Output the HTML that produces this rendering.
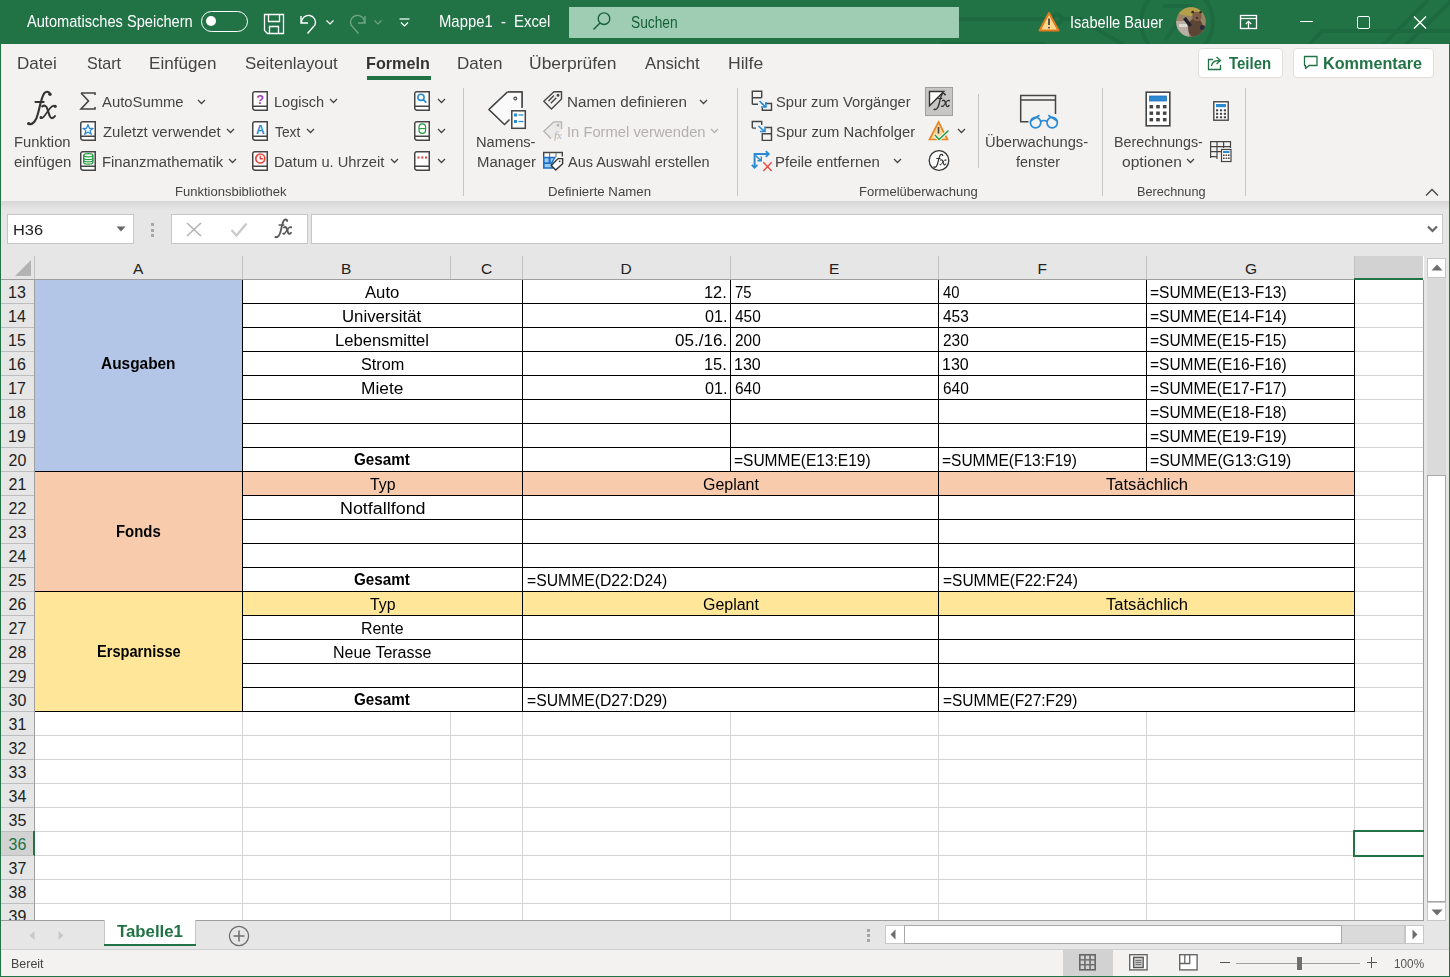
<!DOCTYPE html>
<html><head><meta charset="utf-8"><style>
html,body{margin:0;padding:0;width:1450px;height:977px;overflow:hidden;background:#fff;}
#root{position:relative;width:1450px;height:977px;overflow:hidden;}
#root>div,#root>span,#root>svg{position:absolute;box-sizing:border-box;}
#root>span{white-space:nowrap;transform-origin:0 0;}
#root>svg{overflow:visible;}
</style></head><body><div id="root">
<div style="left:0px;top:0px;width:1450px;height:44px;background:#217346"></div>
<div style="left:0px;top:44px;width:1450px;height:157px;background:#f3f2f1"></div>
<div style="left:0px;top:201px;width:1450px;height:55px;background:#e6e6e6"></div>
<div style="left:0px;top:201px;width:1450px;height:9px;background:linear-gradient(#d6d6d6,#e6e6e6)"></div>
<svg style="left:0px;top:0px;" width="1450" height="44" viewBox="0 0 1450 44"><defs><clipPath id="tbc"><rect width="1450" height="44"/></clipPath></defs><g clip-path="url(#tbc)" stroke="#1e6a40" stroke-width="4" fill="none">
<path d="M959 19 H1052"/><circle cx="1057" cy="19" r="4.5"/><path d="M1061.5 19 H1080 L1125 46"/>
<circle cx="1177" cy="22" r="36"/>
<path d="M1163 6 H1190 L1165 40"/>
<path d="M1308 46 L1322 31 H1452"/>
<path d="M1382 46 L1428 0"/>
<path d="M1405 46 L1452 0"/>
<path d="M940 44 H1045"/>
</g></svg>
<span id="t0" style="left:27.00px;top:14.00px;font:normal 400 15.75px 'Liberation Sans', sans-serif;line-height:15.75px;color:#ffffff;transform:scaleX(0.9278);">Automatisches Speichern</span>
<div style="left:201px;top:11px;width:47px;height:21px;border:1.3px solid #fff;border-radius:11px"></div>
<div style="left:205.5px;top:16px;width:10px;height:10px;background:#fff;border-radius:50%"></div>
<svg style="left:263px;top:13px;" width="22" height="22" viewBox="0 0 22 22"><g fill="none" stroke="#fff" stroke-width="1.3"><path d="M1.5 1.5 H20.5 V20.5 H4.5 L1.5 17.5 Z"/><path d="M5.5 1.5 V8.5 H16.5 V1.5"/><path d="M6.5 20.5 V13.5 H15.5 V20.5"/></g></svg>
<svg style="left:298px;top:13px;" width="22" height="22" viewBox="0 0 22 22"><g fill="none" stroke="#fff" stroke-width="1.4"><path d="M3 3 V10 H10"/><path d="M3.5 9.5 A7 7 0 1 1 17 12 L9.5 20.5"/></g></svg>
<svg style="left:325px;top:19px;" width="10" height="7" viewBox="0 0 10 7"><path d="M1.5 1.5 L5 5 L8.5 1.5" fill="none" stroke="#fff" stroke-width="1.2"/></svg>
<svg style="left:346px;top:13px;" width="22" height="22" viewBox="0 0 22 22"><g fill="none" stroke="#fff" stroke-width="1.4" opacity="0.35"><path d="M19 3 V10 H12"/><path d="M18.5 9.5 A7 7 0 1 0 5 12 L12.5 20.5"/></g></svg>
<svg style="left:373px;top:19px;" width="10" height="7" viewBox="0 0 10 7"><path d="M1.5 1.5 L5 5 L8.5 1.5" fill="none" stroke="#fff" stroke-width="1.2" opacity="0.35"/></svg>
<svg style="left:399px;top:18px;" width="11" height="10" viewBox="0 0 11 10"><g fill="none" stroke="#fff" stroke-width="1.2"><path d="M0.5 1 H10.5"/><path d="M2 4.5 L5.5 8 L9 4.5"/></g></svg>
<span id="t1" style="left:438.56px;top:14.00px;font:normal 400 15.75px 'Liberation Sans', sans-serif;line-height:15.75px;color:#ffffff;transform:scaleX(0.9428);">Mappe1&nbsp;&nbsp;-&nbsp;&nbsp;Excel</span>
<div style="left:569px;top:7px;width:390px;height:31px;background:#9fcdb3"></div>
<svg style="left:592px;top:11px;" width="22" height="22" viewBox="0 0 22 22"><g fill="none" stroke="#17613a" stroke-width="1.4"><circle cx="12" cy="7.7" r="5.8"/><path d="M8 12 L1.5 18.6"/></g></svg>
<span id="t2" style="left:630.50px;top:15.00px;font:normal 400 16px 'Liberation Sans', sans-serif;line-height:16px;color:#17613a;transform:scaleX(0.8601);">Suchen</span>
<svg style="left:1038px;top:11px;" width="22" height="21" viewBox="0 0 22 21"><path d="M11 2 L20.5 19.5 H1.5 Z" fill="#f9d88e" stroke="#e07a1f" stroke-width="2" stroke-linejoin="round"/><path d="M11 7.5 V14" stroke="#333" stroke-width="1.6"/><circle cx="11" cy="16.6" r="0.9" fill="#333"/></svg>
<span id="t3" style="left:1069.57px;top:15.00px;font:normal 400 15.75px 'Liberation Sans', sans-serif;line-height:15.75px;color:#ffffff;transform:scaleX(0.9251);">Isabelle Bauer</span>
<svg style="left:1176px;top:7px;" width="30" height="30" viewBox="0 0 30 30"><defs><clipPath id="avc"><circle cx="15" cy="15" r="14.8"/></clipPath><filter id="avb"><feGaussianBlur stdDeviation="0.6"/></filter></defs>
<g clip-path="url(#avc)"><rect width="30" height="30" fill="#9a8466"/><g filter="url(#avb)"><ellipse cx="15" cy="3" rx="15" ry="6" fill="#b59f4c"/><rect x="0" y="14" width="13" height="16" fill="#b9aea4"/><rect x="3" y="17" width="8" height="3" fill="#ddd8d2"/>
<ellipse cx="19.5" cy="21" rx="7.5" ry="10" fill="#5b4536"/><circle cx="21" cy="9.5" r="4.8" fill="#7d5f46"/><circle cx="16.8" cy="5.2" r="1.4" fill="#3e2e22"/><circle cx="24.8" cy="5.2" r="1.4" fill="#3e2e22"/>
<path d="M8.5 11 L14.5 19" stroke="#22232e" stroke-width="3.6"/><circle cx="26.5" cy="20.5" r="2.6" fill="#2a2b38"/><circle cx="21" cy="11" r="1" fill="#2b2018"/></g></g></svg>
<svg style="left:1239px;top:14px;" width="20" height="16" viewBox="0 0 20 16"><g fill="none" stroke="#fff" stroke-width="1.3"><rect x="1.5" y="1.5" width="16" height="13"/><path d="M1.5 4.5 H17.5"/><path d="M9.5 14 V7.5 M6.8 10 L9.5 7.3 L12.2 10"/></g></svg>
<div style="left:1300px;top:21px;width:13px;height:1.3px;background:#fff"></div>
<div style="left:1357px;top:15.5px;width:12.5px;height:13px;border:1.3px solid #fff;border-radius:2px"></div>
<svg style="left:1413px;top:15.5px;" width="14" height="13" viewBox="0 0 14 13"><path d="M1 0.5 L13 12.5 M13 0.5 L1 12.5" stroke="#fff" stroke-width="1.3"/></svg>
<span id="t4" style="left:17.00px;top:55.00px;font:normal 400 17px 'Liberation Sans', sans-serif;line-height:17px;color:#444444;transform:scaleX(1.0024);">Datei</span>
<span id="t5" style="left:87.30px;top:55.00px;font:normal 400 17px 'Liberation Sans', sans-serif;line-height:17px;color:#444444;transform:scaleX(0.9481);">Start</span>
<span id="t6" style="left:148.99px;top:55.00px;font:normal 400 17px 'Liberation Sans', sans-serif;line-height:17px;color:#444444;transform:scaleX(1.0052);">Einfügen</span>
<span id="t7" style="left:245.00px;top:55.00px;font:normal 400 17px 'Liberation Sans', sans-serif;line-height:17px;color:#444444;transform:scaleX(0.9910);">Seitenlayout</span>
<span id="t8" style="left:366.05px;top:55.00px;font:normal 700 17px 'Liberation Sans', sans-serif;line-height:17px;color:#333;transform:scaleX(0.9516);">Formeln</span>
<div style="left:367px;top:76px;width:64px;height:4px;background:#217346"></div>
<span id="t9" style="left:457.00px;top:55.00px;font:normal 400 17px 'Liberation Sans', sans-serif;line-height:17px;color:#444444;transform:scaleX(1.0021);">Daten</span>
<span id="t10" style="left:528.97px;top:55.00px;font:normal 400 17px 'Liberation Sans', sans-serif;line-height:17px;color:#444444;transform:scaleX(1.0288);">Überprüfen</span>
<span id="t11" style="left:645.00px;top:55.00px;font:normal 400 17px 'Liberation Sans', sans-serif;line-height:17px;color:#444444;transform:scaleX(0.9817);">Ansicht</span>
<span id="t12" style="left:727.96px;top:55.00px;font:normal 400 17px 'Liberation Sans', sans-serif;line-height:17px;color:#444444;transform:scaleX(1.0352);">Hilfe</span>
<div style="left:1198px;top:48px;width:85px;height:30px;background:#fff;border:1px solid #e1dfdd;border-radius:4px"></div>
<div style="left:1293px;top:48px;width:141px;height:30px;background:#fff;border:1px solid #e1dfdd;border-radius:4px"></div>
<svg style="left:1207px;top:55px;" width="16" height="16" viewBox="0 0 16 16"><g fill="none" stroke="#217346" stroke-width="1.3"><path d="M6 4.5 H1.5 V14.5 H13.5 V10"/><path d="M4.5 11 C5 6.5 8 5.5 12 5.5 M9.5 2 L13.5 5.5 L9.5 9"/></g></svg>
<span id="t13" style="left:1228.50px;top:55.00px;font:normal 700 17px 'Liberation Sans', sans-serif;line-height:17px;color:#217346;transform:scaleX(0.8804);">Teilen</span>
<svg style="left:1303px;top:55px;" width="16" height="15" viewBox="0 0 16 15"><path d="M1.5 1.5 H14 V10.5 H6 L2.5 13.5 V10.5 H1.5 Z" fill="none" stroke="#217346" stroke-width="1.3" stroke-linejoin="round"/></svg>
<span id="t14" style="left:1323.05px;top:55.00px;font:normal 700 17px 'Liberation Sans', sans-serif;line-height:17px;color:#217346;transform:scaleX(0.9535);">Kommentare</span>
<svg style="left:26px;top:91px;" width="31.0" height="36.0" viewBox="0 0 31.0 36.0"><g transform="scale(1.0)" fill="none" stroke="#333" stroke-linecap="round">
<path d="M24 3 C23 0.3 20 0.2 18.3 2.2 C15.8 5.2 14 14.5 12 22.5 C10.3 29.5 7 34 3 33" stroke-width="2.1"/>
<circle cx="24" cy="3.2" r="1.7" fill="#333" stroke="none"/><circle cx="2.7" cy="32.6" r="1.7" fill="#333" stroke="none"/>
<path d="M9.3 11 H17.8" stroke-width="1.785"/>
<g transform="translate(0 0)"><path d="M16.2 15.3 C18.6 13.8 20.4 14.8 21.4 18 L23.6 24.8 C24.6 27.8 26.8 28 29 25" stroke-width="2.1"/>
<path d="M29.3 15 C27.3 13.8 25.8 15 23.8 17.6 L18.8 24.4 C17.3 26.8 15.8 27.8 14.8 26.3" stroke-width="1.6800000000000002"/>
<circle cx="29.2" cy="15.3" r="1.6" fill="#333" stroke="none"/><circle cx="15" cy="26.5" r="1.5" fill="#333" stroke="none"/></g>
</g></svg>
<span id="t15" style="left:13.65px;top:134.00px;font:normal 400 15.5px 'Liberation Sans', sans-serif;line-height:15.5px;color:#444444;transform:scaleX(0.9511);">Funktion</span>
<span id="t16" style="left:13.60px;top:154.00px;font:normal 400 15.5px 'Liberation Sans', sans-serif;line-height:15.5px;color:#444444;transform:scaleX(0.9651);">einfügen</span>
<svg style="left:80px;top:92px;" width="16" height="18" viewBox="0 0 16 18"><path d="M1 1 H15 V3 M1 1 L8.5 9 L1 17 H15 V15" fill="none" stroke="#444" stroke-width="1.6" stroke-linejoin="miter"/></svg>
<span id="t17" style="left:102.00px;top:94.00px;font:normal 400 15.5px 'Liberation Sans', sans-serif;line-height:15.5px;color:#444444;transform:scaleX(0.9567);">AutoSumme</span>
<svg style="left:197px;top:99px;" width="9" height="6" viewBox="0 0 9 6"><path d="M1 1 L4.5 4.5 L8 1" fill="none" stroke="#444" stroke-width="1.3" opacity="1"/></svg>
<svg style="left:80px;top:121px;" width="16" height="20" viewBox="0 0 16 20"><g fill="none" stroke="#444" stroke-width="1.5"><path d="M2.75 0.75 H15.25 V19.25 H3 A2.25 2.25 0 0 1 0.75 17 V2.75 A2 2 0 0 1 2.75 0.75 Z" fill="#fff"/><path d="M0.75 15.25 H15.25"/></g><path d="M8 3.5 L9.4 7.3 H13.2 L10.1 9.6 L11.3 13.3 L8 11 L4.7 13.3 L5.9 9.6 L2.8 7.3 H6.6 Z" fill="none" stroke="#2a8ad4" stroke-width="1.2" stroke-linejoin="round"/></svg>
<span id="t18" style="left:102.60px;top:124.00px;font:normal 400 15.5px 'Liberation Sans', sans-serif;line-height:15.5px;color:#444444;transform:scaleX(0.9624);">Zuletzt verwendet</span>
<svg style="left:225.5px;top:128px;" width="9" height="6" viewBox="0 0 9 6"><path d="M1 1 L4.5 4.5 L8 1" fill="none" stroke="#444" stroke-width="1.3" opacity="1"/></svg>
<svg style="left:80px;top:151px;" width="16" height="20" viewBox="0 0 16 20"><g fill="none" stroke="#444" stroke-width="1.5"><path d="M2.75 0.75 H15.25 V19.25 H3 A2.25 2.25 0 0 1 0.75 17 V2.75 A2 2 0 0 1 2.75 0.75 Z" fill="#fff"/><path d="M0.75 15.25 H15.25"/></g><g fill="none" stroke="#1f9a3c" stroke-width="1.3"><ellipse cx="8.3" cy="4.3" rx="4.6" ry="1.6"/><path d="M3.7 4.3 V11.5 A4.6 1.6 0 0 0 12.9 11.5 V4.3"/><path d="M3.7 7 A4.6 1.6 0 0 0 12.9 7"/><path d="M3.7 9.3 A4.6 1.6 0 0 0 12.9 9.3"/></g></svg>
<span id="t19" style="left:101.64px;top:154.00px;font:normal 400 15.5px 'Liberation Sans', sans-serif;line-height:15.5px;color:#444444;transform:scaleX(0.9564);">Finanzmathematik</span>
<svg style="left:227.5px;top:158px;" width="9" height="6" viewBox="0 0 9 6"><path d="M1 1 L4.5 4.5 L8 1" fill="none" stroke="#444" stroke-width="1.3" opacity="1"/></svg>
<svg style="left:252px;top:91px;" width="16" height="20" viewBox="0 0 16 20"><g fill="none" stroke="#444" stroke-width="1.5"><path d="M2.75 0.75 H15.25 V19.25 H3 A2.25 2.25 0 0 1 0.75 17 V2.75 A2 2 0 0 1 2.75 0.75 Z" fill="#fff"/><path d="M0.75 15.25 H15.25"/></g><text x="8.3" y="13" font-family="Liberation Sans" font-weight="bold" font-size="13" fill="#a53fc0" text-anchor="middle">?</text></svg>
<span id="t20" style="left:274.06px;top:94.00px;font:normal 400 15.5px 'Liberation Sans', sans-serif;line-height:15.5px;color:#444444;transform:scaleX(0.9362);">Logisch</span>
<svg style="left:329px;top:98px;" width="9" height="6" viewBox="0 0 9 6"><path d="M1 1 L4.5 4.5 L8 1" fill="none" stroke="#444" stroke-width="1.3" opacity="1"/></svg>
<svg style="left:252px;top:121px;" width="16" height="20" viewBox="0 0 16 20"><g fill="none" stroke="#444" stroke-width="1.5"><path d="M2.75 0.75 H15.25 V19.25 H3 A2.25 2.25 0 0 1 0.75 17 V2.75 A2 2 0 0 1 2.75 0.75 Z" fill="#fff"/><path d="M0.75 15.25 H15.25"/></g><text x="8.3" y="12.5" font-family="Liberation Sans" font-weight="bold" font-size="12" fill="#2a8ad4" text-anchor="middle">A</text></svg>
<span id="t21" style="left:275.00px;top:124.00px;font:normal 400 15.5px 'Liberation Sans', sans-serif;line-height:15.5px;color:#444444;transform:scaleX(0.8928);">Text</span>
<svg style="left:305.5px;top:128px;" width="9" height="6" viewBox="0 0 9 6"><path d="M1 1 L4.5 4.5 L8 1" fill="none" stroke="#444" stroke-width="1.3" opacity="1"/></svg>
<svg style="left:252px;top:151px;" width="16" height="20" viewBox="0 0 16 20"><g fill="none" stroke="#444" stroke-width="1.5"><path d="M2.75 0.75 H15.25 V19.25 H3 A2.25 2.25 0 0 1 0.75 17 V2.75 A2 2 0 0 1 2.75 0.75 Z" fill="#fff"/><path d="M0.75 15.25 H15.25"/></g><circle cx="8.3" cy="7.5" r="4.5" fill="none" stroke="#e8453c" stroke-width="1.7"/><path d="M8.3 4.8 V7.8 H11" fill="none" stroke="#e8453c" stroke-width="1.4"/></svg>
<span id="t22" style="left:274.05px;top:154.00px;font:normal 400 15.5px 'Liberation Sans', sans-serif;line-height:15.5px;color:#444444;transform:scaleX(0.9484);">Datum u. Uhrzeit</span>
<svg style="left:389.5px;top:158px;" width="9" height="6" viewBox="0 0 9 6"><path d="M1 1 L4.5 4.5 L8 1" fill="none" stroke="#444" stroke-width="1.3" opacity="1"/></svg>
<svg style="left:414px;top:91px;" width="16" height="20" viewBox="0 0 16 20"><g fill="none" stroke="#444" stroke-width="1.5"><path d="M2.75 0.75 H15.25 V19.25 H3 A2.25 2.25 0 0 1 0.75 17 V2.75 A2 2 0 0 1 2.75 0.75 Z" fill="#fff"/><path d="M0.75 15.25 H15.25"/></g><circle cx="7" cy="6.3" r="3.1" fill="none" stroke="#2a8ad4" stroke-width="1.6"/><path d="M9.3 8.6 L12.3 11.6" stroke="#2a8ad4" stroke-width="1.8"/></svg>
<svg style="left:436.5px;top:98px;" width="9" height="6" viewBox="0 0 9 6"><path d="M1 1 L4.5 4.5 L8 1" fill="none" stroke="#444" stroke-width="1.3" opacity="1"/></svg>
<svg style="left:414px;top:121px;" width="16" height="20" viewBox="0 0 16 20"><g fill="none" stroke="#444" stroke-width="1.5"><path d="M2.75 0.75 H15.25 V19.25 H3 A2.25 2.25 0 0 1 0.75 17 V2.75 A2 2 0 0 1 2.75 0.75 Z" fill="#fff"/><path d="M0.75 15.25 H15.25"/></g><rect x="5" y="2.8" width="6.6" height="9.6" rx="3.3" fill="none" stroke="#1f9a3c" stroke-width="1.2"/><path d="M5 7.6 H11.6" stroke="#1f9a3c" stroke-width="1.1"/></svg>
<svg style="left:436.5px;top:128px;" width="9" height="6" viewBox="0 0 9 6"><path d="M1 1 L4.5 4.5 L8 1" fill="none" stroke="#444" stroke-width="1.3" opacity="1"/></svg>
<svg style="left:414px;top:151px;" width="16" height="20" viewBox="0 0 16 20"><g fill="none" stroke="#444" stroke-width="1.5"><path d="M2.75 0.75 H15.25 V19.25 H3 A2.25 2.25 0 0 1 0.75 17 V2.75 A2 2 0 0 1 2.75 0.75 Z" fill="#fff"/><path d="M0.75 15.25 H15.25"/></g><g fill="#e03c3c"><rect x="3.5" y="5.5" width="2" height="2"/><rect x="7.3" y="5.5" width="2" height="2"/><rect x="11" y="5.5" width="2" height="2"/></g></svg>
<svg style="left:436.5px;top:158px;" width="9" height="6" viewBox="0 0 9 6"><path d="M1 1 L4.5 4.5 L8 1" fill="none" stroke="#444" stroke-width="1.3" opacity="1"/></svg>
<span id="t23" style="left:175.30px;top:185.00px;font:normal 400 13px 'Liberation Sans', sans-serif;line-height:13px;color:#444444;transform:scaleX(1.0019);">Funktionsbibliothek</span>
<div style="left:463px;top:88px;width:1px;height:108px;background:#c8c6c4"></div>
<svg style="left:488px;top:91px;" width="40" height="40" viewBox="0 0 40 40"><path d="M20 1 H34 V16 M20.8 28.5 L16.5 33 L1 18.5 L19.5 1" fill="#fafafa" stroke="#444" stroke-width="1.5" stroke-linejoin="round"/>
<path d="M19.5 1 H34 V18 L21 28.5 L16.5 33.5 L1 18.5 Z" fill="#fafafa" stroke="none"/>
<path d="M19.5 1 H34 V17" fill="none" stroke="#444" stroke-width="1.5"/><path d="M1 18.5 L19.5 1" fill="none" stroke="#444" stroke-width="1.5"/><path d="M1 18.5 L16.5 33.5 L21.5 28.5" fill="none" stroke="#444" stroke-width="1.5"/>
<circle cx="27.3" cy="7.5" r="1.4" fill="none" stroke="#444" stroke-width="1.1"/>
<rect x="23.8" y="19.8" width="13.5" height="17.5" fill="#fff" stroke="#444" stroke-width="1.5"/>
<rect x="26" y="22.5" width="3" height="3" fill="#2a8ad4"/><path d="M30.5 24 H35.5" stroke="#2a8ad4" stroke-width="1.3"/>
<rect x="26" y="29" width="3" height="3" fill="#2a8ad4"/><path d="M30.5 30.5 H35.5" stroke="#2a8ad4" stroke-width="1.3"/></svg>
<span id="t24" style="left:476.05px;top:134.00px;font:normal 400 15.5px 'Liberation Sans', sans-serif;line-height:15.5px;color:#444444;transform:scaleX(0.9463);">Namens-</span>
<span id="t25" style="left:476.84px;top:154.00px;font:normal 400 15.5px 'Liberation Sans', sans-serif;line-height:15.5px;color:#444444;transform:scaleX(0.9631);">Manager</span>
<svg style="left:543px;top:91px;" width="20" height="19" viewBox="0 0 20 19"><g fill="none" stroke="#444" stroke-width="1.4" stroke-linejoin="round"><path d="M11 0.8 H18.5 V8 L8.5 18 L0.8 10.3 Z"/><circle cx="15" cy="4.3" r="0.8" fill="#444"/><path d="M5.5 10 L11 4.5 M7.8 12.3 L13.3 6.8"/></g></svg>
<span id="t26" style="left:566.62px;top:94.00px;font:normal 400 15.5px 'Liberation Sans', sans-serif;line-height:15.5px;color:#444444;transform:scaleX(0.9807);">Namen definieren</span>
<svg style="left:699px;top:99px;" width="9" height="6" viewBox="0 0 9 6"><path d="M1 1 L4.5 4.5 L8 1" fill="none" stroke="#444" stroke-width="1.3" opacity="1"/></svg>
<svg style="left:543px;top:121px;" width="22" height="20" viewBox="0 0 22 20"><path d="M11 0.8 H18.5 V10 L13 17 H8 L0.8 10.3 Z" fill="#ebeae9" stroke="none"/><g fill="none" stroke="#b5b3b1" stroke-width="1.3"><path d="M11 0.8 H18.5 V8 M8 17.5 L0.8 10.3 L11 0.8"/><circle cx="15" cy="4.3" r="0.8" fill="#b5b3b1"/></g><text x="11" y="18" font-family="Liberation Serif" font-style="italic" font-size="11" fill="#b5b3b1">fx</text></svg>
<span id="t27" style="left:566.65px;top:124.00px;font:normal 400 15.5px 'Liberation Sans', sans-serif;line-height:15.5px;color:#b3b0ad;transform:scaleX(0.9516);">In Formel verwenden</span>
<svg style="left:710px;top:128px;" width="9" height="6" viewBox="0 0 9 6"><path d="M1 1 L4.5 4.5 L8 1" fill="none" stroke="#b3b0ad" stroke-width="1.3" opacity="1"/></svg>
<svg style="left:543px;top:151px;" width="22" height="22" viewBox="0 0 22 22"><rect x="0.7" y="1.5" width="18.6" height="4.5" fill="#fff"/>
<path d="M0.7 6.5 V1.5 H19.3 V5.5" fill="none" stroke="#444" stroke-width="1.4"/><path d="M6.6 1.5 V6 M13 1.5 V6" stroke="#666" stroke-width="1"/>
<path d="M0 5.8 H13 L8.2 14.6 L10.8 17.8 H0 Z" fill="#1c6fc4"/>
<rect x="1.6" y="7.3" width="4" height="4" fill="#9ccbf2"/><path d="M7.6 7.3 H10.9 L8.2 11.3 H7.6 Z" fill="#9ccbf2"/><path d="M1.6 13 H7.6 L9 15.3 L8.4 16.3 H1.6 Z" fill="#9ccbf2"/>
<path d="M8.2 14.6 L15.1 7.6 H19.6 V12.7 L12.7 19.1 Z" fill="#fff" stroke="#333" stroke-width="1.4" stroke-linejoin="miter"/><circle cx="16.7" cy="10.3" r="0.9" fill="#333"/></svg>
<span id="t28" style="left:567.60px;top:154.00px;font:normal 400 15.5px 'Liberation Sans', sans-serif;line-height:15.5px;color:#444444;transform:scaleX(0.9330);">Aus Auswahl erstellen</span>
<span id="t29" style="left:547.98px;top:185.00px;font:normal 400 13px 'Liberation Sans', sans-serif;line-height:13px;color:#444444;transform:scaleX(1.0188);">Definierte Namen</span>
<div style="left:737px;top:88px;width:1px;height:108px;background:#c8c6c4"></div>
<svg style="left:751px;top:90px;" width="22" height="22" viewBox="0 0 22 22"><g fill="none" stroke="#444" stroke-width="1.4"><path d="M1.3 14.3 V1.3 H10.7 V7.7 M1.3 7.7 H10.7 M1.3 14.3 H7"/><path d="M14 13.5 H20.5 V20.3 H11.3 V17.5"/></g><g fill="none" stroke="#2a8ad4" stroke-width="1.6"><path d="M8.5 11 L14.5 17"/><path d="M10 17 H15 V12"/></g></svg>
<span id="t30" style="left:776.40px;top:94.00px;font:normal 400 15.5px 'Liberation Sans', sans-serif;line-height:15.5px;color:#444444;transform:scaleX(0.9472);">Spur zum Vorgänger</span>
<svg style="left:751px;top:120px;" width="22" height="22" viewBox="0 0 22 22"><g fill="none" stroke="#444" stroke-width="1.4"><path d="M1.3 8.1 V1.5 H10.7 V5 M1.3 8.1 H5"/><path d="M14 7.5 H20.5 V20.4 H11.3 V13.8 H20.5"/></g><g fill="none" stroke="#2a8ad4" stroke-width="1.6"><path d="M7.5 6 L13.5 11.5"/><path d="M9 11.5 H14 V6.5"/></g></svg>
<span id="t31" style="left:776.40px;top:124.00px;font:normal 400 15.5px 'Liberation Sans', sans-serif;line-height:15.5px;color:#444444;transform:scaleX(0.9558);">Spur zum Nachfolger</span>
<svg style="left:748px;top:148px;" width="28" height="28" viewBox="0 0 28 28"><g fill="none" stroke="#2a8ad4" stroke-linejoin="miter"><path d="M6.6 19.5 V6 H20.5" stroke-width="2"/><path d="M17.8 3.2 L20.8 6 L17.8 8.8" stroke-width="1.8"/><path d="M3.8 16.8 L6.6 19.8 L9.4 16.8" stroke-width="1.8"/><path d="M7.5 7.5 L13 12.7 M9.5 12.7 H13.3 V8.5" stroke-width="1.4"/></g><path d="M15.3 14.3 L23.7 23 M23.7 14.3 L15.3 23" stroke="#e8453c" stroke-width="1.3"/></svg>
<span id="t32" style="left:775.43px;top:154.00px;font:normal 400 15.5px 'Liberation Sans', sans-serif;line-height:15.5px;color:#444444;transform:scaleX(0.9658);">Pfeile entfernen</span>
<svg style="left:893px;top:158px;" width="9" height="6" viewBox="0 0 9 6"><path d="M1 1 L4.5 4.5 L8 1" fill="none" stroke="#444" stroke-width="1.3" opacity="1"/></svg>
<div style="left:925px;top:87px;width:28px;height:29px;background:#c8c6c4;border:1px solid #a19f9d"></div>
<svg style="left:926px;top:88px;" width="27" height="27" viewBox="0 0 27 27"><path d="M3.5 3.5 H17.8 L3.5 17.8 Z" fill="#fff" stroke="#333" stroke-width="1.4" stroke-linejoin="miter"/></svg>
<svg style="left:933px;top:93px;" width="15.5" height="18.0" viewBox="0 0 15.5 18.0"><g transform="scale(0.5)" fill="none" stroke="#333" stroke-linecap="round">
<path d="M24 3 C23 0.3 20 0.2 18.3 2.2 C15.8 5.2 14 14.5 12 22.5 C10.3 29.5 7 34 3 33" stroke-width="2.8"/>
<circle cx="24" cy="3.2" r="1.7" fill="#333" stroke="none"/><circle cx="2.7" cy="32.6" r="1.7" fill="#333" stroke="none"/>
<path d="M9.3 11 H17.8" stroke-width="2.38"/>
<g transform="translate(3 0)"><path d="M16.2 15.3 C18.6 13.8 20.4 14.8 21.4 18 L23.6 24.8 C24.6 27.8 26.8 28 29 25" stroke-width="2.8"/>
<path d="M29.3 15 C27.3 13.8 25.8 15 23.8 17.6 L18.8 24.4 C17.3 26.8 15.8 27.8 14.8 26.3" stroke-width="2.2399999999999998"/>
<circle cx="29.2" cy="15.3" r="1.6" fill="#333" stroke="none"/><circle cx="15" cy="26.5" r="1.5" fill="#333" stroke="none"/></g>
</g></svg>
<svg style="left:928px;top:120px;" width="22" height="22" viewBox="0 0 22 22"><path d="M10.5 2 L19.5 19.5 H1.5 Z" fill="#fbd99a" stroke="#e8862a" stroke-width="1.7" stroke-linejoin="miter"/><path d="M10.5 7 V13.5" stroke="#444" stroke-width="1.6"/><path d="M7 15 L11 19.5 L20.5 10.5" fill="none" stroke="#f3f2f1" stroke-width="3.6"/><path d="M7 15 L11 19.5 L20.5 10.5" fill="none" stroke="#1f9a3c" stroke-width="1.4"/></svg>
<svg style="left:957px;top:128px;" width="9" height="6" viewBox="0 0 9 6"><path d="M1 1 L4.5 4.5 L8 1" fill="none" stroke="#444" stroke-width="1.3" opacity="1"/></svg>
<svg style="left:928px;top:150px;" width="22" height="22" viewBox="0 0 22 22"><circle cx="11" cy="10.5" r="9.8" fill="#fafafa" stroke="#333" stroke-width="1.3"/></svg>
<svg style="left:933px;top:154px;" width="12.4" height="14.4" viewBox="0 0 12.4 14.4"><g transform="scale(0.4)" fill="none" stroke="#333" stroke-linecap="round">
<path d="M24 3 C23 0.3 20 0.2 18.3 2.2 C15.8 5.2 14 14.5 12 22.5 C10.3 29.5 7 34 3 33" stroke-width="3"/>
<circle cx="24" cy="3.2" r="1.7" fill="#333" stroke="none"/><circle cx="2.7" cy="32.6" r="1.7" fill="#333" stroke="none"/>
<path d="M9.3 11 H17.8" stroke-width="2.55"/>
<g transform="translate(3 0)"><path d="M16.2 15.3 C18.6 13.8 20.4 14.8 21.4 18 L23.6 24.8 C24.6 27.8 26.8 28 29 25" stroke-width="3"/>
<path d="M29.3 15 C27.3 13.8 25.8 15 23.8 17.6 L18.8 24.4 C17.3 26.8 15.8 27.8 14.8 26.3" stroke-width="2.4000000000000004"/>
<circle cx="29.2" cy="15.3" r="1.6" fill="#333" stroke="none"/><circle cx="15" cy="26.5" r="1.5" fill="#333" stroke="none"/></g>
</g></svg>
<div style="left:978px;top:94px;width:1px;height:74px;background:#c8c6c4"></div>
<svg style="left:1019px;top:94px;" width="42" height="36" viewBox="0 0 42 36"><g fill="none" stroke="#444" stroke-width="1.5"><path d="M9.5 27.7 H1.7 V1.5 H36.5 V20"/><path d="M1.7 6 H36.5"/></g><g fill="none" stroke="#2a8ad4" stroke-width="1.7"><circle cx="16.6" cy="28.6" r="5.2"/><circle cx="33.2" cy="28.6" r="5.2"/><path d="M21.8 27.5 Q24.9 25.5 28 27.5"/><path d="M11.5 27 L20.5 21.2 M29.3 21.2 L38.3 27"/></g></svg>
<span id="t33" style="left:985.45px;top:134.00px;font:normal 400 15.5px 'Liberation Sans', sans-serif;line-height:15.5px;color:#444444;transform:scaleX(0.9498);">Überwachungs-</span>
<span id="t34" style="left:1015.80px;top:154.00px;font:normal 400 15.5px 'Liberation Sans', sans-serif;line-height:15.5px;color:#444444;transform:scaleX(0.9296);">fenster</span>
<span id="t35" style="left:859.00px;top:185.00px;font:normal 400 13px 'Liberation Sans', sans-serif;line-height:13px;color:#444444;transform:scaleX(1.0019);">Formelüberwachung</span>
<div style="left:1101.5px;top:88px;width:1px;height:108px;background:#c8c6c4"></div>
<svg style="left:1145px;top:91px;" width="26" height="36" viewBox="0 0 26 36"><rect x="1.2" y="1.2" width="23.6" height="33.6" fill="#fff" stroke="#444" stroke-width="1.6"/><rect x="4.5" y="5" width="17" height="5" fill="#2a8ad4" stroke="#2a6eb0" stroke-width="0.8"/><g fill="#444"><rect x="4.5" y="14" width="3.6" height="3.4"/><rect x="11.2" y="14" width="3.6" height="3.4"/><rect x="17.9" y="14" width="3.6" height="3.4"/><rect x="4.5" y="20.5" width="3.6" height="3.4"/><rect x="11.2" y="20.5" width="3.6" height="3.4"/><rect x="17.9" y="20.5" width="3.6" height="3.4"/><rect x="4.5" y="27" width="3.6" height="3.4"/><rect x="11.2" y="27" width="3.6" height="3.4"/><rect x="17.9" y="27" width="3.6" height="3.4"/></g></svg>
<span id="t36" style="left:1113.88px;top:134.00px;font:normal 400 15.5px 'Liberation Sans', sans-serif;line-height:15.5px;color:#444444;transform:scaleX(0.9209);">Berechnungs-</span>
<span id="t37" style="left:1122.20px;top:154.00px;font:normal 400 15.5px 'Liberation Sans', sans-serif;line-height:15.5px;color:#444444;transform:scaleX(1.0059);">optionen</span>
<svg style="left:1186px;top:158px;" width="9" height="6" viewBox="0 0 9 6"><path d="M1 1 L4.5 4.5 L8 1" fill="none" stroke="#444" stroke-width="1.3" opacity="1"/></svg>
<svg style="left:1213px;top:101px;" width="16" height="20" viewBox="0 0 16 20"><rect x="0.8" y="0.8" width="14.4" height="18.4" fill="#fff" stroke="#444" stroke-width="1.4"/><rect x="3" y="3" width="10" height="3.2" fill="#2a8ad4"/><g fill="#444"><rect x="3" y="8.3" width="2.2" height="2"/><rect x="6.9" y="8.3" width="2.2" height="2"/><rect x="10.8" y="8.3" width="2.2" height="2"/><rect x="3" y="11.8" width="2.2" height="2"/><rect x="6.9" y="11.8" width="2.2" height="2"/><rect x="10.8" y="11.8" width="2.2" height="2"/><rect x="3" y="15.3" width="2.2" height="2"/><rect x="6.9" y="15.3" width="2.2" height="2"/><rect x="10.8" y="15.3" width="2.2" height="2"/></g></svg>
<svg style="left:1210px;top:141px;" width="22" height="21" viewBox="0 0 22 21"><g fill="none" stroke="#444" stroke-width="1.2"><path d="M0.6 17 V0.6 H20.5 V7"/><path d="M0.6 5.6 H20.5 M0.6 10.6 H11 M0.6 15.6 H7 M7 0.6 V18 M13.6 0.6 V7"/></g><rect x="11.5" y="8.5" width="9.5" height="12" fill="#fff" stroke="#444" stroke-width="1.2"/><rect x="13" y="10" width="6.5" height="2" fill="#2a8ad4"/><g fill="#444"><rect x="13" y="13.5" width="1.6" height="1.5"/><rect x="15.6" y="13.5" width="1.6" height="1.5"/><rect x="18" y="13.5" width="1.6" height="1.5"/><rect x="13" y="16.5" width="1.6" height="1.5"/><rect x="15.6" y="16.5" width="1.6" height="1.5"/><rect x="18" y="16.5" width="1.6" height="1.5"/></g></svg>
<span id="t38" style="left:1137.42px;top:185.00px;font:normal 400 13px 'Liberation Sans', sans-serif;line-height:13px;color:#444444;transform:scaleX(0.9771);">Berechnung</span>
<div style="left:1244.5px;top:88px;width:1px;height:108px;background:#c8c6c4"></div>
<svg style="left:1425px;top:188px;" width="14" height="9" viewBox="0 0 14 9"><path d="M1 7.5 L7 1.5 L13 7.5" fill="none" stroke="#444" stroke-width="1.3"/></svg>
<div style="left:7px;top:214px;width:127px;height:30px;background:#fff;border:1px solid #c6c6c6"></div>
<span id="t39" style="left:13.44px;top:222.00px;font:normal 400 15.5px 'Liberation Sans', sans-serif;line-height:15.5px;color:#222;transform:scaleX(1.0554);">H36</span>
<svg style="left:116px;top:226px;" width="10" height="6" viewBox="0 0 10 6"><path d="M0.5 0.5 H9.5 L5 5.5 Z" fill="#666"/></svg>
<div style="left:151px;top:223px;width:3px;height:3px;background:#a6a6a6"></div>
<div style="left:151px;top:228.5px;width:3px;height:3px;background:#a6a6a6"></div>
<div style="left:151px;top:234px;width:3px;height:3px;background:#a6a6a6"></div>
<div style="left:171px;top:214px;width:137px;height:30px;background:#fff;border:1px solid #c6c6c6"></div>
<svg style="left:186px;top:222px;" width="16" height="15" viewBox="0 0 16 15"><path d="M1 1 L15 14 M15 1 L1 14" stroke="#b3b3b3" stroke-width="1.6"/></svg>
<svg style="left:230px;top:222px;" width="18" height="15" viewBox="0 0 18 15"><path d="M1.5 8 L6.5 13.5 L16.5 1.5" fill="none" stroke="#c8c8c8" stroke-width="2.2"/></svg>
<svg style="left:274px;top:219px;" width="17.05" height="19.8" viewBox="0 0 17.05 19.8"><g transform="scale(0.55)" fill="none" stroke="#595959" stroke-linecap="round">
<path d="M24 3 C23 0.3 20 0.2 18.3 2.2 C15.8 5.2 14 14.5 12 22.5 C10.3 29.5 7 34 3 33" stroke-width="3.4"/>
<circle cx="24" cy="3.2" r="1.7" fill="#595959" stroke="none"/><circle cx="2.7" cy="32.6" r="1.7" fill="#595959" stroke="none"/>
<path d="M9.3 11 H17.8" stroke-width="2.8899999999999997"/>
<g transform="translate(2 0)"><path d="M16.2 15.3 C18.6 13.8 20.4 14.8 21.4 18 L23.6 24.8 C24.6 27.8 26.8 28 29 25" stroke-width="3.4"/>
<path d="M29.3 15 C27.3 13.8 25.8 15 23.8 17.6 L18.8 24.4 C17.3 26.8 15.8 27.8 14.8 26.3" stroke-width="2.72"/>
<circle cx="29.2" cy="15.3" r="1.6" fill="#595959" stroke="none"/><circle cx="15" cy="26.5" r="1.5" fill="#595959" stroke="none"/></g>
</g></svg>
<div style="left:311px;top:214px;width:1132px;height:30px;background:#fff;border:1px solid #c6c6c6"></div>
<svg style="left:1427px;top:225px;" width="11" height="8" viewBox="0 0 11 8"><path d="M1 1.5 L5.5 6 L10 1.5" fill="none" stroke="#666" stroke-width="2.2"/></svg>
<div style="left:0px;top:256px;width:1423px;height:23px;background:#e6e6e6"></div>
<svg style="left:15px;top:260px;" width="16" height="16" viewBox="0 0 16 16"><path d="M16 0 L16 16 L0 16 Z" fill="#b3b3b3"/></svg>
<div style="left:242px;top:256px;width:1px;height:23px;background:#c2c2c2"></div>
<div style="left:450px;top:256px;width:1px;height:23px;background:#c2c2c2"></div>
<div style="left:522px;top:256px;width:1px;height:23px;background:#c2c2c2"></div>
<div style="left:730px;top:256px;width:1px;height:23px;background:#c2c2c2"></div>
<div style="left:938px;top:256px;width:1px;height:23px;background:#c2c2c2"></div>
<div style="left:1146px;top:256px;width:1px;height:23px;background:#c2c2c2"></div>
<div style="left:1354px;top:256px;width:1px;height:23px;background:#c2c2c2"></div>
<div style="left:34px;top:256px;width:1px;height:23px;background:#c2c2c2"></div>
<div style="left:1355px;top:256px;width:68px;height:23px;background:#d2d2d2"></div>
<div style="left:1354px;top:278px;width:69px;height:2px;background:#217346"></div>
<div style="left:0px;top:279px;width:1354px;height:1px;background:#9e9e9e"></div>
<div style="left:1423px;top:280px;width:1px;height:640px;background:#9e9e9e"></div>
<span id="t40" style="left:133.00px;top:261.00px;font:normal 400 15.5px 'Liberation Sans', sans-serif;line-height:15.5px;color:#222;transform:scaleX(1.0000);">A</span>
<span id="t41" style="left:341.00px;top:261.00px;font:normal 400 15.5px 'Liberation Sans', sans-serif;line-height:15.5px;color:#222;transform:scaleX(1.0000);">B</span>
<span id="t42" style="left:481.00px;top:261.00px;font:normal 400 15.5px 'Liberation Sans', sans-serif;line-height:15.5px;color:#222;transform:scaleX(1.0000);">C</span>
<span id="t43" style="left:620.50px;top:261.00px;font:normal 400 15.5px 'Liberation Sans', sans-serif;line-height:15.5px;color:#222;transform:scaleX(1.0000);">D</span>
<span id="t44" style="left:829.00px;top:261.00px;font:normal 400 15.5px 'Liberation Sans', sans-serif;line-height:15.5px;color:#222;transform:scaleX(1.0000);">E</span>
<span id="t45" style="left:1037.50px;top:261.00px;font:normal 400 15.5px 'Liberation Sans', sans-serif;line-height:15.5px;color:#222;transform:scaleX(1.0000);">F</span>
<span id="t46" style="left:1245.00px;top:261.00px;font:normal 400 15.5px 'Liberation Sans', sans-serif;line-height:15.5px;color:#222;transform:scaleX(1.0000);">G</span>
<div style="left:0px;top:280px;width:34px;height:640px;background:#e6e6e6"></div>
<div style="left:34px;top:280px;width:1px;height:640px;background:#9e9e9e"></div>
<div style="left:0px;top:303px;width:34px;height:1px;background:#bdbdbd"></div>
<span id="t47" style="left:8.05px;top:285.00px;font:normal 400 16px 'Liberation Sans', sans-serif;line-height:16px;color:#222;transform:scaleX(1.0000);">13</span>
<div style="left:0px;top:327px;width:34px;height:1px;background:#bdbdbd"></div>
<span id="t48" style="left:8.05px;top:309.00px;font:normal 400 16px 'Liberation Sans', sans-serif;line-height:16px;color:#222;transform:scaleX(1.0000);">14</span>
<div style="left:0px;top:351px;width:34px;height:1px;background:#bdbdbd"></div>
<span id="t49" style="left:8.05px;top:333.00px;font:normal 400 16px 'Liberation Sans', sans-serif;line-height:16px;color:#222;transform:scaleX(1.0000);">15</span>
<div style="left:0px;top:375px;width:34px;height:1px;background:#bdbdbd"></div>
<span id="t50" style="left:8.05px;top:357.00px;font:normal 400 16px 'Liberation Sans', sans-serif;line-height:16px;color:#222;transform:scaleX(1.0000);">16</span>
<div style="left:0px;top:399px;width:34px;height:1px;background:#bdbdbd"></div>
<span id="t51" style="left:8.05px;top:381.00px;font:normal 400 16px 'Liberation Sans', sans-serif;line-height:16px;color:#222;transform:scaleX(1.0000);">17</span>
<div style="left:0px;top:423px;width:34px;height:1px;background:#bdbdbd"></div>
<span id="t52" style="left:8.05px;top:405.00px;font:normal 400 16px 'Liberation Sans', sans-serif;line-height:16px;color:#222;transform:scaleX(1.0000);">18</span>
<div style="left:0px;top:447px;width:34px;height:1px;background:#bdbdbd"></div>
<span id="t53" style="left:8.05px;top:429.00px;font:normal 400 16px 'Liberation Sans', sans-serif;line-height:16px;color:#222;transform:scaleX(1.0000);">19</span>
<div style="left:0px;top:471px;width:34px;height:1px;background:#bdbdbd"></div>
<span id="t54" style="left:8.55px;top:453.00px;font:normal 400 16px 'Liberation Sans', sans-serif;line-height:16px;color:#222;transform:scaleX(1.0000);">20</span>
<div style="left:0px;top:495px;width:34px;height:1px;background:#bdbdbd"></div>
<span id="t55" style="left:8.55px;top:477.00px;font:normal 400 16px 'Liberation Sans', sans-serif;line-height:16px;color:#222;transform:scaleX(1.0000);">21</span>
<div style="left:0px;top:519px;width:34px;height:1px;background:#bdbdbd"></div>
<span id="t56" style="left:8.55px;top:501.00px;font:normal 400 16px 'Liberation Sans', sans-serif;line-height:16px;color:#222;transform:scaleX(1.0000);">22</span>
<div style="left:0px;top:543px;width:34px;height:1px;background:#bdbdbd"></div>
<span id="t57" style="left:8.55px;top:525.00px;font:normal 400 16px 'Liberation Sans', sans-serif;line-height:16px;color:#222;transform:scaleX(1.0000);">23</span>
<div style="left:0px;top:567px;width:34px;height:1px;background:#bdbdbd"></div>
<span id="t58" style="left:8.55px;top:549.00px;font:normal 400 16px 'Liberation Sans', sans-serif;line-height:16px;color:#222;transform:scaleX(1.0000);">24</span>
<div style="left:0px;top:591px;width:34px;height:1px;background:#bdbdbd"></div>
<span id="t59" style="left:8.55px;top:573.00px;font:normal 400 16px 'Liberation Sans', sans-serif;line-height:16px;color:#222;transform:scaleX(1.0000);">25</span>
<div style="left:0px;top:615px;width:34px;height:1px;background:#bdbdbd"></div>
<span id="t60" style="left:8.55px;top:597.00px;font:normal 400 16px 'Liberation Sans', sans-serif;line-height:16px;color:#222;transform:scaleX(1.0000);">26</span>
<div style="left:0px;top:639px;width:34px;height:1px;background:#bdbdbd"></div>
<span id="t61" style="left:8.55px;top:621.00px;font:normal 400 16px 'Liberation Sans', sans-serif;line-height:16px;color:#222;transform:scaleX(1.0000);">27</span>
<div style="left:0px;top:663px;width:34px;height:1px;background:#bdbdbd"></div>
<span id="t62" style="left:8.55px;top:645.00px;font:normal 400 16px 'Liberation Sans', sans-serif;line-height:16px;color:#222;transform:scaleX(1.0000);">28</span>
<div style="left:0px;top:687px;width:34px;height:1px;background:#bdbdbd"></div>
<span id="t63" style="left:8.55px;top:669.00px;font:normal 400 16px 'Liberation Sans', sans-serif;line-height:16px;color:#222;transform:scaleX(1.0000);">29</span>
<div style="left:0px;top:711px;width:34px;height:1px;background:#bdbdbd"></div>
<span id="t64" style="left:8.55px;top:693.00px;font:normal 400 16px 'Liberation Sans', sans-serif;line-height:16px;color:#222;transform:scaleX(1.0000);">30</span>
<div style="left:0px;top:735px;width:34px;height:1px;background:#bdbdbd"></div>
<span id="t65" style="left:8.55px;top:717.00px;font:normal 400 16px 'Liberation Sans', sans-serif;line-height:16px;color:#222;transform:scaleX(1.0000);">31</span>
<div style="left:0px;top:759px;width:34px;height:1px;background:#bdbdbd"></div>
<span id="t66" style="left:8.55px;top:741.00px;font:normal 400 16px 'Liberation Sans', sans-serif;line-height:16px;color:#222;transform:scaleX(1.0000);">32</span>
<div style="left:0px;top:783px;width:34px;height:1px;background:#bdbdbd"></div>
<span id="t67" style="left:8.55px;top:765.00px;font:normal 400 16px 'Liberation Sans', sans-serif;line-height:16px;color:#222;transform:scaleX(1.0000);">33</span>
<div style="left:0px;top:807px;width:34px;height:1px;background:#bdbdbd"></div>
<span id="t68" style="left:8.55px;top:789.00px;font:normal 400 16px 'Liberation Sans', sans-serif;line-height:16px;color:#222;transform:scaleX(1.0000);">34</span>
<div style="left:0px;top:831px;width:34px;height:1px;background:#bdbdbd"></div>
<span id="t69" style="left:8.55px;top:813.00px;font:normal 400 16px 'Liberation Sans', sans-serif;line-height:16px;color:#222;transform:scaleX(1.0000);">35</span>
<div style="left:0px;top:832px;width:34px;height:23px;background:#d2d2d2"></div>
<div style="left:33px;top:831px;width:2px;height:25px;background:#217346"></div>
<div style="left:0px;top:855px;width:34px;height:1px;background:#bdbdbd"></div>
<span id="t70" style="left:8.55px;top:837.00px;font:normal 400 16px 'Liberation Sans', sans-serif;line-height:16px;color:#217346;transform:scaleX(1.0000);">36</span>
<div style="left:0px;top:879px;width:34px;height:1px;background:#bdbdbd"></div>
<span id="t71" style="left:8.55px;top:861.00px;font:normal 400 16px 'Liberation Sans', sans-serif;line-height:16px;color:#222;transform:scaleX(1.0000);">37</span>
<div style="left:0px;top:903px;width:34px;height:1px;background:#bdbdbd"></div>
<span id="t72" style="left:8.55px;top:885.00px;font:normal 400 16px 'Liberation Sans', sans-serif;line-height:16px;color:#222;transform:scaleX(1.0000);">38</span>
<span id="t73" style="left:8.55px;top:909.00px;font:normal 400 16px 'Liberation Sans', sans-serif;line-height:16px;color:#222;transform:scaleX(1.0000);">39</span>
<div style="left:35px;top:280px;width:1388px;height:640px;background:#fff"></div>
<div style="left:35px;top:303px;width:1388px;height:1px;background:#d4d4d4"></div>
<div style="left:35px;top:327px;width:1388px;height:1px;background:#d4d4d4"></div>
<div style="left:35px;top:351px;width:1388px;height:1px;background:#d4d4d4"></div>
<div style="left:35px;top:375px;width:1388px;height:1px;background:#d4d4d4"></div>
<div style="left:35px;top:399px;width:1388px;height:1px;background:#d4d4d4"></div>
<div style="left:35px;top:423px;width:1388px;height:1px;background:#d4d4d4"></div>
<div style="left:35px;top:447px;width:1388px;height:1px;background:#d4d4d4"></div>
<div style="left:35px;top:471px;width:1388px;height:1px;background:#d4d4d4"></div>
<div style="left:35px;top:495px;width:1388px;height:1px;background:#d4d4d4"></div>
<div style="left:35px;top:519px;width:1388px;height:1px;background:#d4d4d4"></div>
<div style="left:35px;top:543px;width:1388px;height:1px;background:#d4d4d4"></div>
<div style="left:35px;top:567px;width:1388px;height:1px;background:#d4d4d4"></div>
<div style="left:35px;top:591px;width:1388px;height:1px;background:#d4d4d4"></div>
<div style="left:35px;top:615px;width:1388px;height:1px;background:#d4d4d4"></div>
<div style="left:35px;top:639px;width:1388px;height:1px;background:#d4d4d4"></div>
<div style="left:35px;top:663px;width:1388px;height:1px;background:#d4d4d4"></div>
<div style="left:35px;top:687px;width:1388px;height:1px;background:#d4d4d4"></div>
<div style="left:35px;top:711px;width:1388px;height:1px;background:#d4d4d4"></div>
<div style="left:35px;top:735px;width:1388px;height:1px;background:#d4d4d4"></div>
<div style="left:35px;top:759px;width:1388px;height:1px;background:#d4d4d4"></div>
<div style="left:35px;top:783px;width:1388px;height:1px;background:#d4d4d4"></div>
<div style="left:35px;top:807px;width:1388px;height:1px;background:#d4d4d4"></div>
<div style="left:35px;top:831px;width:1388px;height:1px;background:#d4d4d4"></div>
<div style="left:35px;top:855px;width:1388px;height:1px;background:#d4d4d4"></div>
<div style="left:35px;top:879px;width:1388px;height:1px;background:#d4d4d4"></div>
<div style="left:35px;top:903px;width:1388px;height:1px;background:#d4d4d4"></div>
<div style="left:242px;top:280px;width:1px;height:640px;background:#d4d4d4"></div>
<div style="left:450px;top:280px;width:1px;height:640px;background:#d4d4d4"></div>
<div style="left:522px;top:280px;width:1px;height:640px;background:#d4d4d4"></div>
<div style="left:730px;top:280px;width:1px;height:640px;background:#d4d4d4"></div>
<div style="left:938px;top:280px;width:1px;height:640px;background:#d4d4d4"></div>
<div style="left:1146px;top:280px;width:1px;height:640px;background:#d4d4d4"></div>
<div style="left:1354px;top:280px;width:1px;height:640px;background:#d4d4d4"></div>
<div style="left:35px;top:280px;width:207px;height:191px;background:#b4c6e7"></div>
<div style="left:35px;top:472px;width:207px;height:119px;background:#f8cbad"></div>
<div style="left:35px;top:592px;width:207px;height:119px;background:#ffe699"></div>
<div style="left:243px;top:472px;width:1111px;height:23px;background:#f8cbad"></div>
<div style="left:243px;top:592px;width:1111px;height:23px;background:#ffe699"></div>
<div style="left:450px;top:280px;width:1px;height:191px;background:#fff"></div>
<div style="left:450px;top:472px;width:1px;height:23px;background:#f8cbad"></div>
<div style="left:450px;top:496px;width:1px;height:95px;background:#fff"></div>
<div style="left:450px;top:592px;width:1px;height:23px;background:#ffe699"></div>
<div style="left:450px;top:616px;width:1px;height:95px;background:#fff"></div>
<div style="left:730px;top:472px;width:1px;height:23px;background:#f8cbad"></div>
<div style="left:730px;top:496px;width:1px;height:95px;background:#fff"></div>
<div style="left:730px;top:592px;width:1px;height:23px;background:#ffe699"></div>
<div style="left:730px;top:616px;width:1px;height:95px;background:#fff"></div>
<div style="left:1146px;top:472px;width:1px;height:23px;background:#f8cbad"></div>
<div style="left:1146px;top:496px;width:1px;height:95px;background:#fff"></div>
<div style="left:1146px;top:592px;width:1px;height:23px;background:#ffe699"></div>
<div style="left:1146px;top:616px;width:1px;height:95px;background:#fff"></div>
<div style="left:242px;top:303px;width:1113px;height:1px;background:#000"></div>
<div style="left:242px;top:327px;width:1113px;height:1px;background:#000"></div>
<div style="left:242px;top:351px;width:1113px;height:1px;background:#000"></div>
<div style="left:242px;top:375px;width:1113px;height:1px;background:#000"></div>
<div style="left:242px;top:399px;width:1113px;height:1px;background:#000"></div>
<div style="left:242px;top:423px;width:1113px;height:1px;background:#000"></div>
<div style="left:242px;top:447px;width:1113px;height:1px;background:#000"></div>
<div style="left:35px;top:471px;width:1320px;height:1px;background:#000"></div>
<div style="left:242px;top:495px;width:1113px;height:1px;background:#000"></div>
<div style="left:242px;top:519px;width:1113px;height:1px;background:#000"></div>
<div style="left:242px;top:543px;width:1113px;height:1px;background:#000"></div>
<div style="left:242px;top:567px;width:1113px;height:1px;background:#000"></div>
<div style="left:35px;top:591px;width:1320px;height:1px;background:#000"></div>
<div style="left:242px;top:615px;width:1113px;height:1px;background:#000"></div>
<div style="left:242px;top:639px;width:1113px;height:1px;background:#000"></div>
<div style="left:242px;top:663px;width:1113px;height:1px;background:#000"></div>
<div style="left:242px;top:687px;width:1113px;height:1px;background:#000"></div>
<div style="left:35px;top:711px;width:1320px;height:1px;background:#000"></div>
<div style="left:242px;top:280px;width:1px;height:432px;background:#000"></div>
<div style="left:1354px;top:280px;width:1px;height:432px;background:#000"></div>
<div style="left:522px;top:280px;width:1px;height:432px;background:#000"></div>
<div style="left:938px;top:280px;width:1px;height:432px;background:#000"></div>
<div style="left:730px;top:280px;width:1px;height:192px;background:#000"></div>
<div style="left:1146px;top:280px;width:1px;height:192px;background:#000"></div>
<span id="t74" style="left:365.30px;top:285.00px;font:normal 400 16px 'Liberation Sans', sans-serif;line-height:16px;color:#000;transform:scaleX(1.0419);">Auto</span>
<span id="t75" style="left:704.17px;top:285.00px;font:normal 400 16px 'Liberation Sans', sans-serif;line-height:16px;color:#000;transform:scaleX(1.0254);">12.</span>
<span id="t76" style="left:734.60px;top:285.00px;font:normal 400 16px 'Liberation Sans', sans-serif;line-height:16px;color:#000;transform:scaleX(0.9275);">75</span>
<span id="t77" style="left:942.60px;top:285.00px;font:normal 400 16px 'Liberation Sans', sans-serif;line-height:16px;color:#000;transform:scaleX(0.9275);">40</span>
<span id="t78" style="left:1150.40px;top:285.00px;font:normal 400 16px 'Liberation Sans', sans-serif;line-height:16px;color:#000;transform:scaleX(0.9695);">=SUMME(E13-F13)</span>
<span id="t79" style="left:342.10px;top:309.00px;font:normal 400 16px 'Liberation Sans', sans-serif;line-height:16px;color:#000;transform:scaleX(1.0475);">Universität</span>
<span id="t80" style="left:704.50px;top:309.00px;font:normal 400 16px 'Liberation Sans', sans-serif;line-height:16px;color:#000;transform:scaleX(1.0098);">01.</span>
<span id="t81" style="left:734.60px;top:309.00px;font:normal 400 16px 'Liberation Sans', sans-serif;line-height:16px;color:#000;transform:scaleX(0.9628);">450</span>
<span id="t82" style="left:942.60px;top:309.00px;font:normal 400 16px 'Liberation Sans', sans-serif;line-height:16px;color:#000;transform:scaleX(0.9628);">453</span>
<span id="t83" style="left:1150.40px;top:309.00px;font:normal 400 16px 'Liberation Sans', sans-serif;line-height:16px;color:#000;transform:scaleX(0.9695);">=SUMME(E14-F14)</span>
<span id="t84" style="left:335.26px;top:333.00px;font:normal 400 16px 'Liberation Sans', sans-serif;line-height:16px;color:#000;transform:scaleX(1.0363);">Lebensmittel</span>
<span id="t85" style="left:674.90px;top:333.00px;font:normal 400 16px 'Liberation Sans', sans-serif;line-height:16px;color:#000;transform:scaleX(1.0656);">05./16.</span>
<span id="t86" style="left:734.60px;top:333.00px;font:normal 400 16px 'Liberation Sans', sans-serif;line-height:16px;color:#000;transform:scaleX(0.9628);">200</span>
<span id="t87" style="left:942.60px;top:333.00px;font:normal 400 16px 'Liberation Sans', sans-serif;line-height:16px;color:#000;transform:scaleX(0.9628);">230</span>
<span id="t88" style="left:1150.40px;top:333.00px;font:normal 400 16px 'Liberation Sans', sans-serif;line-height:16px;color:#000;transform:scaleX(0.9695);">=SUMME(E15-F15)</span>
<span id="t89" style="left:361.00px;top:357.00px;font:normal 400 16px 'Liberation Sans', sans-serif;line-height:16px;color:#000;transform:scaleX(1.0155);">Strom</span>
<span id="t90" style="left:704.17px;top:357.00px;font:normal 400 16px 'Liberation Sans', sans-serif;line-height:16px;color:#000;transform:scaleX(1.0254);">15.</span>
<span id="t91" style="left:733.60px;top:357.00px;font:normal 400 16px 'Liberation Sans', sans-serif;line-height:16px;color:#000;transform:scaleX(1.0001);">130</span>
<span id="t92" style="left:941.60px;top:357.00px;font:normal 400 16px 'Liberation Sans', sans-serif;line-height:16px;color:#000;transform:scaleX(1.0001);">130</span>
<span id="t93" style="left:1150.40px;top:357.00px;font:normal 400 16px 'Liberation Sans', sans-serif;line-height:16px;color:#000;transform:scaleX(0.9695);">=SUMME(E16-F16)</span>
<span id="t94" style="left:360.72px;top:381.00px;font:normal 400 16px 'Liberation Sans', sans-serif;line-height:16px;color:#000;transform:scaleX(1.0830);">Miete</span>
<span id="t95" style="left:704.50px;top:381.00px;font:normal 400 16px 'Liberation Sans', sans-serif;line-height:16px;color:#000;transform:scaleX(1.0098);">01.</span>
<span id="t96" style="left:734.60px;top:381.00px;font:normal 400 16px 'Liberation Sans', sans-serif;line-height:16px;color:#000;transform:scaleX(0.9628);">640</span>
<span id="t97" style="left:942.60px;top:381.00px;font:normal 400 16px 'Liberation Sans', sans-serif;line-height:16px;color:#000;transform:scaleX(0.9628);">640</span>
<span id="t98" style="left:1150.40px;top:381.00px;font:normal 400 16px 'Liberation Sans', sans-serif;line-height:16px;color:#000;transform:scaleX(0.9695);">=SUMME(E17-F17)</span>
<span id="t99" style="left:1150.40px;top:405.00px;font:normal 400 16px 'Liberation Sans', sans-serif;line-height:16px;color:#000;transform:scaleX(0.9695);">=SUMME(E18-F18)</span>
<span id="t100" style="left:1150.40px;top:429.00px;font:normal 400 16px 'Liberation Sans', sans-serif;line-height:16px;color:#000;transform:scaleX(0.9695);">=SUMME(E19-F19)</span>
<span id="t101" style="left:354.25px;top:452.00px;font:normal 700 16px 'Liberation Sans', sans-serif;line-height:16px;color:#000;transform:scaleX(0.9517);">Gesamt</span>
<span id="t102" style="left:734.30px;top:453.00px;font:normal 400 16px 'Liberation Sans', sans-serif;line-height:16px;color:#000;transform:scaleX(0.9694);">=SUMME(E13:E19)</span>
<span id="t103" style="left:942.30px;top:453.00px;font:normal 400 16px 'Liberation Sans', sans-serif;line-height:16px;color:#000;transform:scaleX(0.9689);">=SUMME(F13:F19)</span>
<span id="t104" style="left:1150.30px;top:453.00px;font:normal 400 16px 'Liberation Sans', sans-serif;line-height:16px;color:#000;transform:scaleX(0.9781);">=SUMME(G13:G19)</span>
<span id="t105" style="left:101.40px;top:356.00px;font:normal 700 16px 'Liberation Sans', sans-serif;line-height:16px;color:#000;transform:scaleX(0.9638);">Ausgaben</span>
<span id="t106" style="left:370.20px;top:477.00px;font:normal 400 16px 'Liberation Sans', sans-serif;line-height:16px;color:#000;transform:scaleX(0.9888);">Typ</span>
<span id="t107" style="left:702.60px;top:477.00px;font:normal 400 16px 'Liberation Sans', sans-serif;line-height:16px;color:#000;transform:scaleX(0.9966);">Geplant</span>
<span id="t108" style="left:1106.30px;top:477.00px;font:normal 400 16px 'Liberation Sans', sans-serif;line-height:16px;color:#000;transform:scaleX(1.0364);">Tatsächlich</span>
<span id="t109" style="left:370.20px;top:597.00px;font:normal 400 16px 'Liberation Sans', sans-serif;line-height:16px;color:#000;transform:scaleX(0.9888);">Typ</span>
<span id="t110" style="left:702.60px;top:597.00px;font:normal 400 16px 'Liberation Sans', sans-serif;line-height:16px;color:#000;transform:scaleX(0.9966);">Geplant</span>
<span id="t111" style="left:1106.30px;top:597.00px;font:normal 400 16px 'Liberation Sans', sans-serif;line-height:16px;color:#000;transform:scaleX(1.0364);">Tatsächlich</span>
<span id="t112" style="left:339.98px;top:501.00px;font:normal 400 16px 'Liberation Sans', sans-serif;line-height:16px;color:#000;transform:scaleX(1.1181);">Notfallfond</span>
<span id="t113" style="left:354.25px;top:572.00px;font:normal 700 16px 'Liberation Sans', sans-serif;line-height:16px;color:#000;transform:scaleX(0.9517);">Gesamt</span>
<span id="t114" style="left:526.80px;top:573.00px;font:normal 400 16px 'Liberation Sans', sans-serif;line-height:16px;color:#000;transform:scaleX(0.9833);">=SUMME(D22:D24)</span>
<span id="t115" style="left:942.80px;top:573.00px;font:normal 400 16px 'Liberation Sans', sans-serif;line-height:16px;color:#000;transform:scaleX(0.9689);">=SUMME(F22:F24)</span>
<span id="t116" style="left:115.87px;top:524.00px;font:normal 700 16px 'Liberation Sans', sans-serif;line-height:16px;color:#000;transform:scaleX(0.9322);">Fonds</span>
<span id="t117" style="left:361.00px;top:621.00px;font:normal 400 16px 'Liberation Sans', sans-serif;line-height:16px;color:#000;transform:scaleX(0.9953);">Rente</span>
<span id="t118" style="left:332.90px;top:645.00px;font:normal 400 16px 'Liberation Sans', sans-serif;line-height:16px;color:#000;transform:scaleX(0.9998);">Neue Terasse</span>
<span id="t119" style="left:354.25px;top:692.00px;font:normal 700 16px 'Liberation Sans', sans-serif;line-height:16px;color:#000;transform:scaleX(0.9517);">Gesamt</span>
<span id="t120" style="left:526.80px;top:693.00px;font:normal 400 16px 'Liberation Sans', sans-serif;line-height:16px;color:#000;transform:scaleX(0.9833);">=SUMME(D27:D29)</span>
<span id="t121" style="left:942.80px;top:693.00px;font:normal 400 16px 'Liberation Sans', sans-serif;line-height:16px;color:#000;transform:scaleX(0.9653);">=SUMME(F27:F29)</span>
<span id="t122" style="left:96.89px;top:644.00px;font:normal 700 16px 'Liberation Sans', sans-serif;line-height:16px;color:#000;transform:scaleX(0.9128);">Ersparnisse</span>
<div style="left:1353px;top:830px;width:71px;height:27px;border:2px solid #217346;border-right:none"></div>
<div style="left:1424px;top:256px;width:25px;height:665px;background:#e6e6e6"></div>
<div style="left:1427px;top:258px;width:19px;height:20px;background:#fff;border:1px solid #c6c6c6"></div>
<svg style="left:1430.5px;top:264px;" width="12" height="7" viewBox="0 0 12 7"><path d="M6 0.5 L11.5 6.5 H0.5 Z" fill="#6e6e6e"/></svg>
<div style="left:1427px;top:278px;width:19px;height:624px;background:#dadada"></div>
<div style="left:1427px;top:475px;width:19px;height:427px;background:#fff;border:1px solid #a9a9a9"></div>
<div style="left:1427px;top:902px;width:19px;height:19px;background:#fff;border:1px solid #c6c6c6"></div>
<svg style="left:1430.5px;top:909px;" width="12" height="7" viewBox="0 0 12 7"><path d="M0.5 0.5 H11.5 L6 6.5 Z" fill="#6e6e6e"/></svg>
<div style="left:0px;top:920px;width:1424px;height:1px;background:#9e9e9e"></div>
<div style="left:1px;top:921px;width:1448px;height:28px;background:#e6e6e6"></div>
<div style="left:0px;top:949px;width:1450px;height:1px;background:#d0d0d0"></div>
<svg style="left:28.5px;top:930.5px;" width="6" height="9" viewBox="0 0 6 9"><path d="M5.5 0 V9 L0.5 4.5 Z" fill="#c8c8c8"/></svg>
<svg style="left:57.5px;top:930.5px;" width="6" height="9" viewBox="0 0 6 9"><path d="M0.5 0 V9 L5.5 4.5 Z" fill="#c8c8c8"/></svg>
<div style="left:104px;top:920px;width:92px;height:26px;background:#fff;border-left:1px solid #c6c6c6;border-right:1px solid #c6c6c6"></div>
<div style="left:104px;top:944px;width:92px;height:2px;background:#217346"></div>
<span id="t123" style="left:116.50px;top:924.00px;font:normal 700 16px 'Liberation Sans', sans-serif;line-height:16px;color:#217346;transform:scaleX(1.0485);">Tabelle1</span>
<svg style="left:228px;top:925px;" width="22" height="22" viewBox="0 0 22 22"><circle cx="11" cy="11" r="9.6" fill="none" stroke="#6e6e6e" stroke-width="1.3"/><path d="M11 5.5 V16.5 M5.5 11 H16.5" stroke="#6e6e6e" stroke-width="1.5"/></svg>
<div style="left:867px;top:929px;width:3px;height:3px;background:#a6a6a6"></div>
<div style="left:867px;top:934px;width:3px;height:3px;background:#a6a6a6"></div>
<div style="left:867px;top:939px;width:3px;height:3px;background:#a6a6a6"></div>
<div style="left:885px;top:925px;width:520px;height:19px;background:#dadada;border:1px solid #c6c6c6"></div>
<div style="left:885px;top:925px;width:20px;height:19px;background:#fff;border:1px solid #c6c6c6"></div>
<svg style="left:890px;top:929px;" width="7" height="11" viewBox="0 0 7 11"><path d="M5.5 0.5 V10.5 L0.5 5.5 Z" fill="#6e6e6e"/></svg>
<div style="left:904px;top:925px;width:438px;height:19px;background:#fff;border:1px solid #a9a9a9"></div>
<div style="left:1405px;top:925px;width:19px;height:19px;background:#fff;border:1px solid #c6c6c6"></div>
<svg style="left:1412px;top:929px;" width="7" height="11" viewBox="0 0 7 11"><path d="M0.5 0.5 V10.5 L5.5 5.5 Z" fill="#6e6e6e"/></svg>
<div style="left:1px;top:950px;width:1448px;height:26px;background:#f3f2f1"></div>
<span id="t124" style="left:10.54px;top:957.00px;font:normal 400 13px 'Liberation Sans', sans-serif;line-height:13px;color:#444;transform:scaleX(0.9596);">Bereit</span>
<div style="left:1063px;top:950px;width:50px;height:26px;background:#d2d2d2"></div>
<svg style="left:1079px;top:954px;" width="17" height="17" viewBox="0 0 17 17"><rect x="0" y="0" width="17" height="16.6" fill="#666"/><g fill="#d2d2d2"><rect x="1.6" y="1.6" width="3.6" height="3.6"/><rect x="6.7" y="1.6" width="3.6" height="3.6"/><rect x="11.8" y="1.6" width="3.6" height="3.6"/><rect x="1.6" y="6.5" width="3.6" height="3.6"/><rect x="6.7" y="6.5" width="3.6" height="3.6"/><rect x="11.8" y="6.5" width="3.6" height="3.6"/><rect x="1.6" y="11.4" width="3.6" height="3.6"/><rect x="6.7" y="11.4" width="3.6" height="3.6"/><rect x="11.8" y="11.4" width="3.6" height="3.6"/></g></svg>
<svg style="left:1128.5px;top:954px;" width="19" height="17" viewBox="0 0 19 17"><rect x="0.7" y="0.7" width="17.4" height="15.2" fill="#fff" stroke="#666" stroke-width="1.4"/><rect x="4.6" y="3.3" width="9.6" height="10.3" fill="#c8c8c8" stroke="#555" stroke-width="1.3"/><path d="M6.5 6.5 H12.3 M6.5 8.5 H12.3 M6.5 10.5 H12.3" stroke="#666" stroke-width="0.9"/></svg>
<svg style="left:1179px;top:954px;" width="19" height="17" viewBox="0 0 19 17"><rect x="0.7" y="0.7" width="17.4" height="15.2" fill="#fff" stroke="#666" stroke-width="1.4"/><path d="M5.8 0.7 V9.5 H0.7 M10.7 0.7 V9.5 H5.8" fill="none" stroke="#666" stroke-width="1.3"/></svg>
<div style="left:1219.5px;top:962px;width:10.5px;height:1.2px;background:#555"></div>
<div style="left:1236px;top:963px;width:124px;height:1px;background:#a0a0a0"></div>
<div style="left:1296.5px;top:956.5px;width:5px;height:13px;background:#6e6e6e"></div>
<div style="left:1366.5px;top:962px;width:10.5px;height:1.2px;background:#555"></div>
<div style="left:1371.1px;top:957px;width:1.2px;height:10.5px;background:#555"></div>
<span id="t125" style="left:1393.50px;top:957.00px;font:normal 400 13px 'Liberation Sans', sans-serif;line-height:13px;color:#555;transform:scaleX(0.9053);">100%</span>
<div style="left:0px;top:44px;width:1px;height:933px;background:#217346"></div>
<div style="left:1449px;top:44px;width:1px;height:933px;background:#217346"></div>
<div style="left:0px;top:976px;width:1450px;height:1px;background:#217346"></div>
</div></body></html>
